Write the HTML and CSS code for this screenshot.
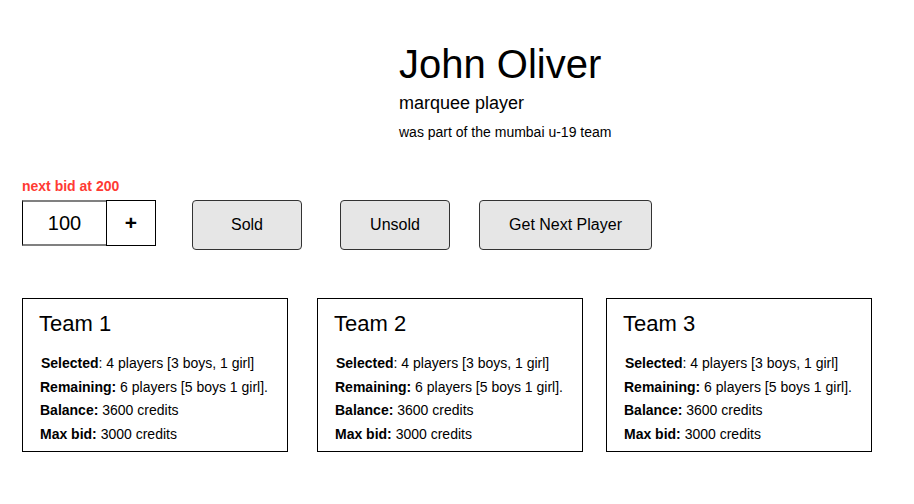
FILE: index.html
```html
<!DOCTYPE html>
<html lang="en">
<head>
<meta charset="utf-8">
<title>Auction</title>
<link rel="stylesheet" href="styles.css">
</head>
<body>
<main class="page">
  <header class="player">
    <h1 class="player-name">John Oliver</h1>
    <p class="player-role">marquee player</p>
    <p class="player-note">was part of the mumbai u-19 team</p>
  </header>

  <section class="bidding">
    <p class="next-bid">next bid at 200</p>
    <div class="controls">
      <div class="bid-group">
        <input class="bid-input" type="text" value="100">
        <button class="bid-plus" type="button">+</button>
      </div>
      <button class="action action-sold" type="button">Sold</button>
      <button class="action action-unsold" type="button">Unsold</button>
      <button class="action action-next" type="button">Get Next Player</button>
    </div>
  </section>

  <section class="teams">
    <article class="team">
      <h2 class="team-name">Team 1</h2>
      <p class="team-row team-row-first"><b>Selected</b>: 4 players [3 boys, 1 girl]</p>
      <p class="team-row"><b>Remaining:</b> 6 players [5 boys 1 girl].</p>
      <p class="team-row"><b>Balance:</b> 3600 credits</p>
      <p class="team-row"><b>Max bid:</b> 3000 credits</p>
    </article>
    <article class="team">
      <h2 class="team-name">Team 2</h2>
      <p class="team-row team-row-first"><b>Selected</b>: 4 players [3 boys, 1 girl]</p>
      <p class="team-row"><b>Remaining:</b> 6 players [5 boys 1 girl].</p>
      <p class="team-row"><b>Balance:</b> 3600 credits</p>
      <p class="team-row"><b>Max bid:</b> 3000 credits</p>
    </article>
    <article class="team">
      <h2 class="team-name">Team 3</h2>
      <p class="team-row team-row-first"><b>Selected</b>: 4 players [3 boys, 1 girl]</p>
      <p class="team-row"><b>Remaining:</b> 6 players [5 boys 1 girl].</p>
      <p class="team-row"><b>Balance:</b> 3600 credits</p>
      <p class="team-row"><b>Max bid:</b> 3000 credits</p>
    </article>
  </section>
</main>
</body>
</html>
```

FILE: styles.css
```css
* { box-sizing: border-box; }

html, body {
  margin: 0;
  padding: 0;
  background: #fff;
  color: #000;
  font-family: "Liberation Sans", Arial, sans-serif;
}

.page {
  padding-top: 41px;
}

.player {
  padding-left: 399px;
}

.player-name {
  margin: 0;
  font-size: 40px;
  line-height: 46px;
  font-weight: normal;
}

.player-role {
  margin: 6px 0 0;
  font-size: 18px;
  line-height: 21px;
}

.player-note {
  margin: 10px 0 0;
  font-size: 14px;
  line-height: 16px;
}

.bidding {
  margin-top: 38px;
  padding-left: 22px;
}

.next-bid {
  margin: 0;
  font-size: 14px;
  line-height: 16px;
  font-weight: bold;
  color: #ff3a33;
}

.controls {
  display: flex;
  align-items: flex-start;
  margin-top: 6px;
}

.bid-group {
  display: flex;
}

.bid-input {
  width: 84px;
  height: 46px;
  margin: 0;
  padding: 0;
  border: none;
  border-left: 1px solid #000;
  border-top: 2px solid #808080;
  border-bottom: 2px solid #808080;
  font-family: "Liberation Sans", Arial, sans-serif;
  font-size: 20px;
  text-align: center;
  color: #000;
  background: #fff;
  outline: none;
}

.bid-plus {
  width: 50px;
  height: 46px;
  margin: 0;
  padding: 0;
  border: 1px solid #000;
  background: #fff;
  font-family: "Liberation Sans", Arial, sans-serif;
  font-size: 21px;
  font-weight: bold;
  color: #000;
}

.action {
  height: 50px;
  margin: 0;
  padding: 0;
  border: 1px solid #333;
  border-radius: 4px;
  background: #e6e6e6;
  font-family: "Liberation Sans", Arial, sans-serif;
  font-size: 16px;
  color: #000;
}

.action-sold { width: 110px; margin-left: 36px; }
.action-unsold { width: 110px; margin-left: 38px; }
.action-next { width: 173px; margin-left: 29px; }

.teams {
  display: flex;
  margin-top: 48px;
  padding-left: 22px;
}

.team {
  width: 266px;
  height: 154px;
  border: 1px solid #000;
  padding: 12px 16px 0;
}

.team:nth-child(2) { margin-left: 29px; }
.team:nth-child(3) { margin-left: 23px; }

.team-name {
  margin: 0 0 16px;
  font-size: 22px;
  line-height: 25px;
  font-weight: normal;
}

.team-row {
  margin: 0;
  padding-left: 1px;
  font-size: 14px;
  line-height: 23.5px;
}

.team-row-first {
  padding-left: 2px;
}
```
